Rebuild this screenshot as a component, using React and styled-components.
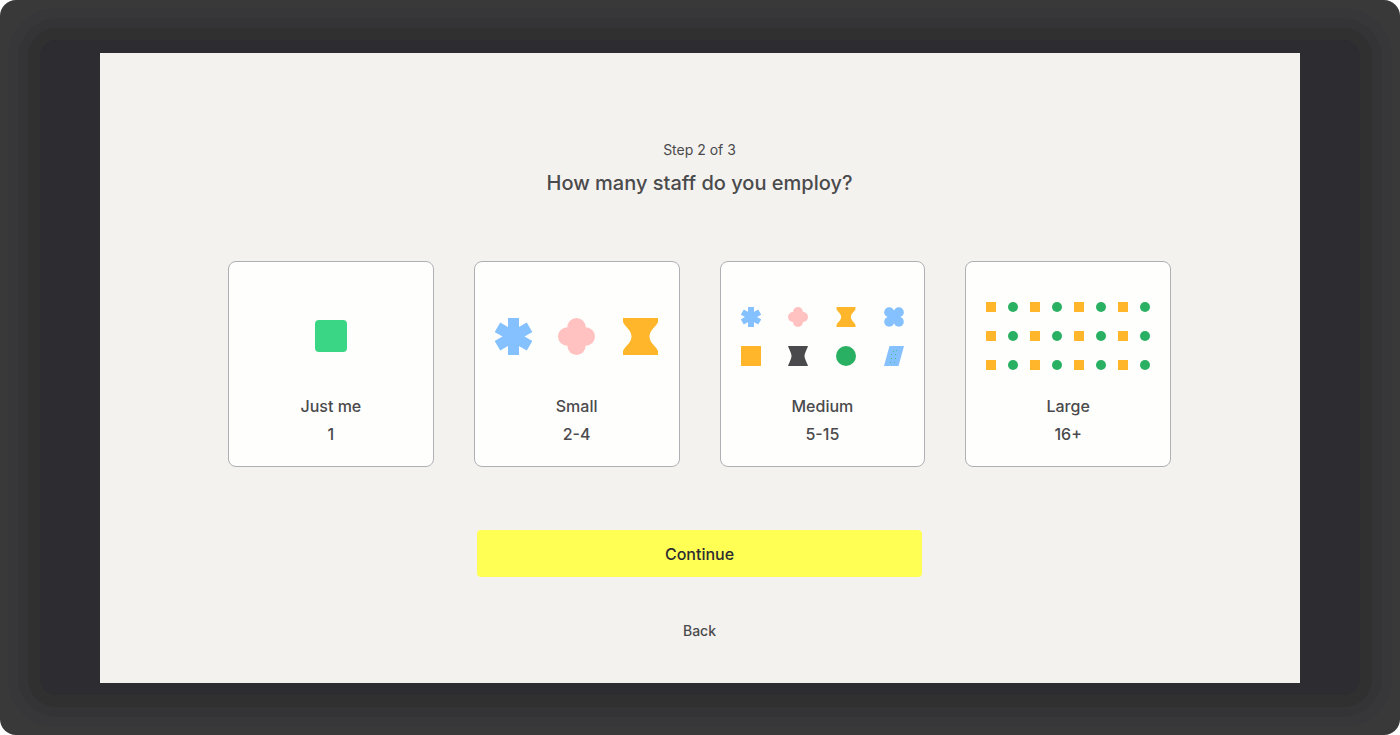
import { useState } from "react";
import styled, { createGlobalStyle } from "styled-components";

const SQUARE = "#ffb62a";
const BLUE = "#85c0ff";
const GREEN = "#29b062";

const Asterisk = () => (
  <svg viewBox="0 0 37 37" fill={BLUE} aria-hidden="true">
    <rect x="13" width="11" height="37" />
    <rect x="13" width="11" height="37" transform="rotate(60 18.5 18.5)" />
    <rect x="13" width="11" height="37" transform="rotate(120 18.5 18.5)" />
  </svg>
);

const Flower = () => (
  <svg viewBox="0 0 37 37" fill="#ffc2c0" aria-hidden="true">
    <circle cx="18.5" cy="9.2" r="9.2" />
    <circle cx="18.5" cy="27.8" r="9.2" />
    <circle cx="9.2" cy="18.5" r="9.2" />
    <circle cx="27.8" cy="18.5" r="9.2" />
    <rect x="9.8" y="9.8" width="17.4" height="17.4" />
  </svg>
);

const Hourglass = () => (
  <svg viewBox="0 0 37 37" fill={SQUARE} aria-hidden="true">
    <path d="M1 0H36V4C34 9 27.5 12 27.5 18.5C27.5 25 34 28 36 33V37H1V33C3 28 9.5 25 9.5 18.5C9.5 12 3 9 1 4Z" />
  </svg>
);

const Clover = () => (
  <svg viewBox="0 0 20 20" fill={BLUE} aria-hidden="true">
    <circle cx="5.2" cy="5.2" r="5" />
    <circle cx="14.8" cy="5.2" r="5" />
    <circle cx="5.2" cy="14.8" r="5" />
    <circle cx="14.8" cy="14.8" r="5" />
    <rect x="5" y="5" width="10" height="10" />
  </svg>
);

const Spool = () => (
  <svg viewBox="0 0 20 20" fill="#4a4a4c" aria-hidden="true">
    <path d="M0 0H20C19 3 16.5 7.5 16.5 10S19 17 20 20H0C1 17 3.5 12.5 3.5 10S1 3 0 0Z" />
  </svg>
);

const Slant = () => (
  <svg viewBox="0 0 20 20" aria-hidden="true">
    <path d="M5.5 0H20L14.5 20H0Z" fill={BLUE} />
    <g fill="#3fc48f">
      <rect x="9" y="5" width="1" height="1" />
      <rect x="12" y="4" width="1" height="1" />
      <rect x="7" y="8" width="1" height="1" />
      <rect x="11" y="8" width="1" height="1" />
      <rect x="7" y="12" width="1" height="1" />
      <rect x="11" y="12" width="1" height="1" />
      <rect x="6" y="16" width="1" height="1" />
      <rect x="10" y="16" width="1" height="1" />
    </g>
  </svg>
);

const Square = () => (
  <svg viewBox="0 0 20 20" fill={SQUARE} aria-hidden="true">
    <rect width="20" height="20" />
  </svg>
);

const Dot = () => (
  <svg viewBox="0 0 20 20" fill={GREEN} aria-hidden="true">
    <circle cx="10" cy="10" r="10" />
  </svg>
);

const Tile = () => (
  <svg viewBox="0 0 32 32" fill="#3bd685" aria-hidden="true">
    <rect width="32" height="32" rx="4" />
  </svg>
);

const largeShapes = Array.from({ length: 24 }, (_, i) =>
  i % 2 === 0 ? Square : Dot
);

const options = [
  { name: "Just me", range: "1", columns: 1, size: 32, shapes: [Tile] },
  {
    name: "Small",
    range: "2-4",
    columns: 3,
    size: 37,
    shapes: [Asterisk, Flower, Hourglass],
  },
  {
    name: "Medium",
    range: "5-15",
    columns: 4,
    size: 20,
    shapes: [Asterisk, Flower, Hourglass, Clover, Square, Spool, Dot, Slant],
  },
  { name: "Large", range: "16+", columns: 8, size: 10, shapes: largeShapes },
];

const App = () => {
  const [selected, setSelected] = useState(null);

  return (
    <>
      <GlobalStyle />
      <Backdrop>
        <Band color="#373739" radius="48px" pad="10px">
          <Band color="#343437" radius="40px" pad="10px">
            <Band color="#303031" radius="28px" pad="12px">
              <Band color="#2d2c30" radius="16px" pad="13px 60px 12px">
                <Panel>
                  <Step>Step 2 of 3</Step>
                  <Title>How many staff do you employ?</Title>
                  <Options>
                    {options.map(({ name, range, columns, size, shapes }) => (
                      <Card
                        key={name}
                        type="button"
                        aria-pressed={selected === name}
                        onClick={() => setSelected(name)}
                      >
                        <Art columns={columns} size={size}>
                          {shapes.map((Shape, i) => (
                            <Shape key={i} />
                          ))}
                        </Art>
                        <Label>{name}</Label>
                        <Label>{range}</Label>
                      </Card>
                    ))}
                  </Options>
                  <Continue type="button">Continue</Continue>
                  <Back type="button">Back</Back>
                </Panel>
              </Band>
            </Band>
          </Band>
        </Band>
      </Backdrop>
    </>
  );
};

const GlobalStyle = createGlobalStyle`
  * {
    box-sizing: border-box;
  }
  body {
    margin: 0;
    background-color: #fff;
    font-family: Inter, sans-serif;
    color: #4a4a4c;
  }
  button {
    font-family: inherit;
    color: inherit;
    cursor: pointer;
  }
`;

const Backdrop = styled.div`
  display: flex;
  min-height: 100vh;
  padding: 8px;
  border-radius: 16px;
  background-color: #39393a;
`;

const Band = styled.div.withConfig({
  shouldForwardProp: (prop) => !["color", "radius", "pad"].includes(prop),
})`
  display: flex;
  flex: 1;
  min-width: 0;
  padding: ${({ pad }) => pad};
  border-radius: ${({ radius }) => radius};
  background-color: ${({ color }) => color};
`;

const Panel = styled.main`
  display: flex;
  flex: 1;
  flex-direction: column;
  align-items: center;
  min-width: 0;
  padding: 87px 25px 40px 24px;
  background-color: #f4f2ef;
`;

const Step = styled.p`
  margin: 0;
  font-size: 14px;
  line-height: 20px;
`;

const Title = styled.h1`
  margin: 9px 0 64px;
  font-size: 20px;
  font-weight: 500;
  line-height: 28px;
`;

const Options = styled.div`
  display: grid;
  grid-template-columns: repeat(4, 1fr);
  gap: 40px;
  width: 100%;
  max-width: 943px;
`;

const Card = styled.button`
  display: flex;
  flex-direction: column;
  align-items: center;
  padding: 39px 20px 18px;
  border: 1px solid #b0b0b4;
  border-radius: 8px;
  background-color: #fefefc;
`;

const Art = styled.span.withConfig({
  shouldForwardProp: (prop) => !["columns", "size"].includes(prop),
})`
  display: grid;
  grid-template-columns: repeat(
    ${({ columns }) => columns},
    ${({ size }) => size}px
  );
  justify-content: ${({ columns }) =>
    columns === 1 ? "center" : "space-between"};
  align-content: center;
  row-gap: 19px;
  width: 100%;
  height: 70px;
  margin-bottom: 21px;
  svg {
    display: block;
    width: 100%;
  }
`;

const Label = styled.span`
  font-size: 16px;
  font-weight: 500;
  line-height: 28px;
`;

const Continue = styled.button`
  width: 100%;
  max-width: 445px;
  height: 47px;
  margin-top: 63px;
  border: none;
  border-radius: 4px;
  background-color: #ffff54;
  color: #2d2c30;
  font-size: 16px;
  font-weight: 500;
`;

const Back = styled.button`
  margin-top: 44px;
  padding: 0;
  border: none;
  background: none;
  font-size: 14px;
  font-weight: 500;
  line-height: 20px;
`;

export default App;
